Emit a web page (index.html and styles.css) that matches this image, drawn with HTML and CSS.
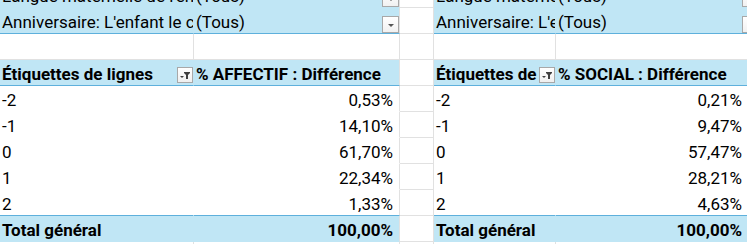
FILE: index.html
```html
<!DOCTYPE html>
<html lang="fr">
<head>
<meta charset="utf-8">
<title>Tableau croisé</title>
<link rel="stylesheet" href="styles.css">
</head>
<body>
<div class="sheet">
  <div class="row">
    <div class="cell pv filter">Langue maternelle de l'enfant</div>
    <div class="cell pv filter gb">(Tous)<span class="dd"></span></div>
    <div class="cell gb"></div>
    <div class="cell pv filter">Langue maternelle de l'enfant</div>
    <div class="cell pv filter">(Tous)<span class="dd"></span></div>
  </div>
  <div class="row">
    <div class="cell pv filter lineb">Anniversaire: L'enfant le connaît</div>
    <div class="cell pv filter lineb gb">(Tous)<span class="dd"></span></div>
    <div class="cell gb"></div>
    <div class="cell pv filter lineb">Anniversaire: L'enfant le connaît</div>
    <div class="cell pv filter lineb">(Tous)<span class="dd"></span></div>
  </div>
  <div class="row">
    <div class="cell gb"></div>
    <div class="cell gb"></div>
    <div class="cell gb"></div>
    <div class="cell gb"></div>
    <div class="cell gb"></div>
  </div>
  <div class="row">
    <div class="cell pv bold lineb">Étiquettes de lignes<span class="fb"><svg viewBox="0 0 14 14" width="14" height="14"><path d="M6 4h6v1l-2 2v4h-2v-4l-2-2z" fill="#3f3f3f"/><path d="M2 8h4l-2 2z" fill="#3f3f3f"/></svg></span></div>
    <div class="cell pv bold lineb gb">% AFFECTIF : Différence</div>
    <div class="cell gb"></div>
    <div class="cell pv bold lineb">Étiquettes de lignes<span class="fb"><svg viewBox="0 0 14 14" width="14" height="14"><path d="M6 4h6v1l-2 2v4h-2v-4l-2-2z" fill="#3f3f3f"/><path d="M2 8h4l-2 2z" fill="#3f3f3f"/></svg></span></div>
    <div class="cell pv bold lineb">% SOCIAL : Différence</div>
  </div>
  <div class="row">
    <div class="cell body">-2</div>
    <div class="cell body num numb gb">0,53%</div>
    <div class="cell gb"></div>
    <div class="cell body">-2</div>
    <div class="cell body num nume">0,21%</div>
  </div>
  <div class="row">
    <div class="cell body">-1</div>
    <div class="cell body num numb gb">14,10%</div>
    <div class="cell gb"></div>
    <div class="cell body">-1</div>
    <div class="cell body num nume">9,47%</div>
  </div>
  <div class="row">
    <div class="cell body">0</div>
    <div class="cell body num numb gb">61,70%</div>
    <div class="cell gb"></div>
    <div class="cell body">0</div>
    <div class="cell body num nume">57,47%</div>
  </div>
  <div class="row">
    <div class="cell body">1</div>
    <div class="cell body num numb gb">22,34%</div>
    <div class="cell gb"></div>
    <div class="cell body">1</div>
    <div class="cell body num nume">28,21%</div>
  </div>
  <div class="row">
    <div class="cell body lineb">2</div>
    <div class="cell body num numb lineb gb">1,33%</div>
    <div class="cell gb"></div>
    <div class="cell body lineb">2</div>
    <div class="cell body num nume lineb">4,63%</div>
  </div>
  <div class="row">
    <div class="cell pv bold">Total général</div>
    <div class="cell pv bold num numb gb">100,00%</div>
    <div class="cell gb"></div>
    <div class="cell pv bold">Total général</div>
    <div class="cell pv bold num nume">100,00%</div>
  </div>
  <div class="row">
    <div class="cell gb"></div>
    <div class="cell gb"></div>
    <div class="cell gb"></div>
    <div class="cell gb"></div>
    <div class="cell gb"></div>
  </div>
</div>
</body>
</html>
```

FILE: styles.css
```css
html, body {
  margin: 0;
  padding: 0;
  background: #ffffff;
  overflow: hidden;
  height: 244px;
}

.sheet {
  margin-top: -18px;
  font-family: Roboto, "Liberation Sans", sans-serif;
  font-size: 17px;
  color: #000000;
  width: 760px;
}

.row {
  display: grid;
  grid-template-columns: 194px 206px 34px 122px 204px;
  height: 26px;
}

.cell {
  position: relative;
  box-sizing: border-box;
  height: 26px;
  border-right: 1px solid #e1e1e1;
  border-bottom: 1px solid #e1e1e1;
  padding: 0 3px 1px 2px;
  line-height: 20px;
  display: flex;
  align-items: flex-end;
  white-space: nowrap;
  overflow: hidden;
  background: #ffffff;
}

.cell.pv {
  background: #c0e6f5;
  border-right-color: #c0e6f5;
  border-bottom-color: #c0e6f5;
}

.cell.body {
  background: #ffffff;
  border-right-color: #ffffff;
  border-bottom-color: #ffffff;
}

.cell.gb {
  border-right-color: #e1e1e1;
}

.cell.lineb {
  border-bottom-color: #5eb0dc;
}

.cell.bold {
  font-weight: 700;
}

.cell.num {
  justify-content: flex-end;
}

.cell.numb {
  padding-right: 6px;
}

.cell.nume {
  padding-right: 17px;
}

.dd {
  position: absolute;
  right: 0;
  bottom: 0;
  width: 17px;
  height: 17px;
  box-sizing: border-box;
  border: 1px solid #a8a8a8;
  background: linear-gradient(#ffffff, #f1f1f1);
}

.dd::after {
  content: "";
  position: absolute;
  left: 5px;
  top: 7px;
  border-left: 3px solid transparent;
  border-right: 3px solid transparent;
  border-top: 3px solid #555555;
}

.fb {
  position: absolute;
  right: 0;
  bottom: 2px;
  width: 16px;
  height: 16px;
  box-sizing: border-box;
  border: 1px solid #a8a8a8;
  background: linear-gradient(#ffffff, #efefef);
  display: flex;
}

.fb svg {
  display: block;
}
```
